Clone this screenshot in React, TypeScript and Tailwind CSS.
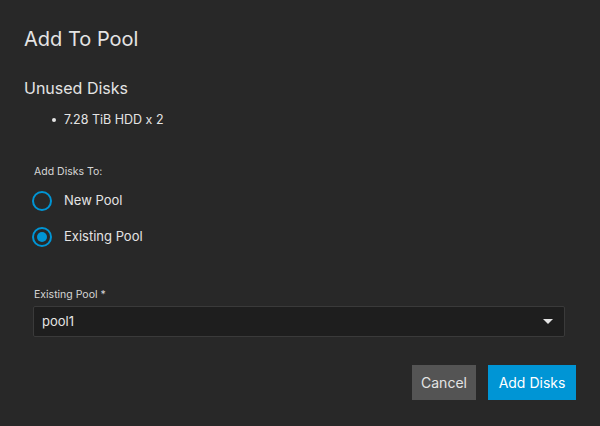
import React, { useState } from 'react';

const Radio = ({ label, checked, onClick }: { label: string; checked: boolean; onClick: () => void }) => (
  <label className="flex h-9 cursor-pointer items-center gap-3 pl-2" onClick={onClick}>
    <span className="flex h-5 w-5 items-center justify-center rounded-full border-2 border-[#0095d5]">
      {checked && <span className="h-2.5 w-2.5 rounded-full bg-[#0095d5]" />}
    </span>
    <span className="text-[13px] text-[#e4e4e4]">{label}</span>
  </label>
);

export default function App() {
  const [mode, setMode] = useState<'new' | 'existing'>('existing');

  return (
    <div className="h-[426px] w-[600px] bg-[#282828] px-6 pt-[25px] font-['Inter',sans-serif] text-[#e4e4e4]">
      <h2 className="text-[20px] leading-7">Add To Pool</h2>

      <h3 className="mt-[23px] text-[16px] leading-6">Unused Disks</h3>
      <ul className="mt-[10px] pl-7">
        <li className="flex items-center gap-2 text-[12.5px] leading-5">
          <span className="h-1 w-1 rounded-full bg-[#e4e4e4]" />
          7.28 TiB HDD x 2
        </li>
      </ul>

      <div className="mt-[34px] pl-2.5 text-[10.5px] leading-4 text-[#d6d6d6]">Add Disks To:</div>
      <div className="mt-[3px] flex flex-col">
        <Radio label="New Pool" checked={mode === 'new'} onClick={() => setMode('new')} />
        <Radio label="Existing Pool" checked={mode === 'existing'} onClick={() => setMode('existing')} />
      </div>

      <div className="mt-[32px] pl-2.5 text-[10.5px] leading-4 text-[#d6d6d6]">Existing Pool *</div>
      <div className="ml-[9px] mr-[11px] mt-[3px] flex h-[31px] items-center justify-between rounded-[2px] border border-[#3a3a3a] bg-[#1e1e1e] pl-2 pr-[11px]">
        <span className="text-[13px] text-[#e4e4e4]">pool1</span>
        <span className="h-0 w-0 border-x-[5px] border-t-[5px] border-x-transparent border-t-[#e4e4e4]" />
      </div>

      <div className="mt-[28px] flex justify-end gap-3">
        <button className="h-[35px] w-[64px] bg-[#545454] text-[14px] text-[#e4e4e4]">Cancel</button>
        <button className="h-[35px] w-[88px] bg-[#0095d5] text-[14px] text-white">Add Disks</button>
      </div>
    </div>
  );
}
